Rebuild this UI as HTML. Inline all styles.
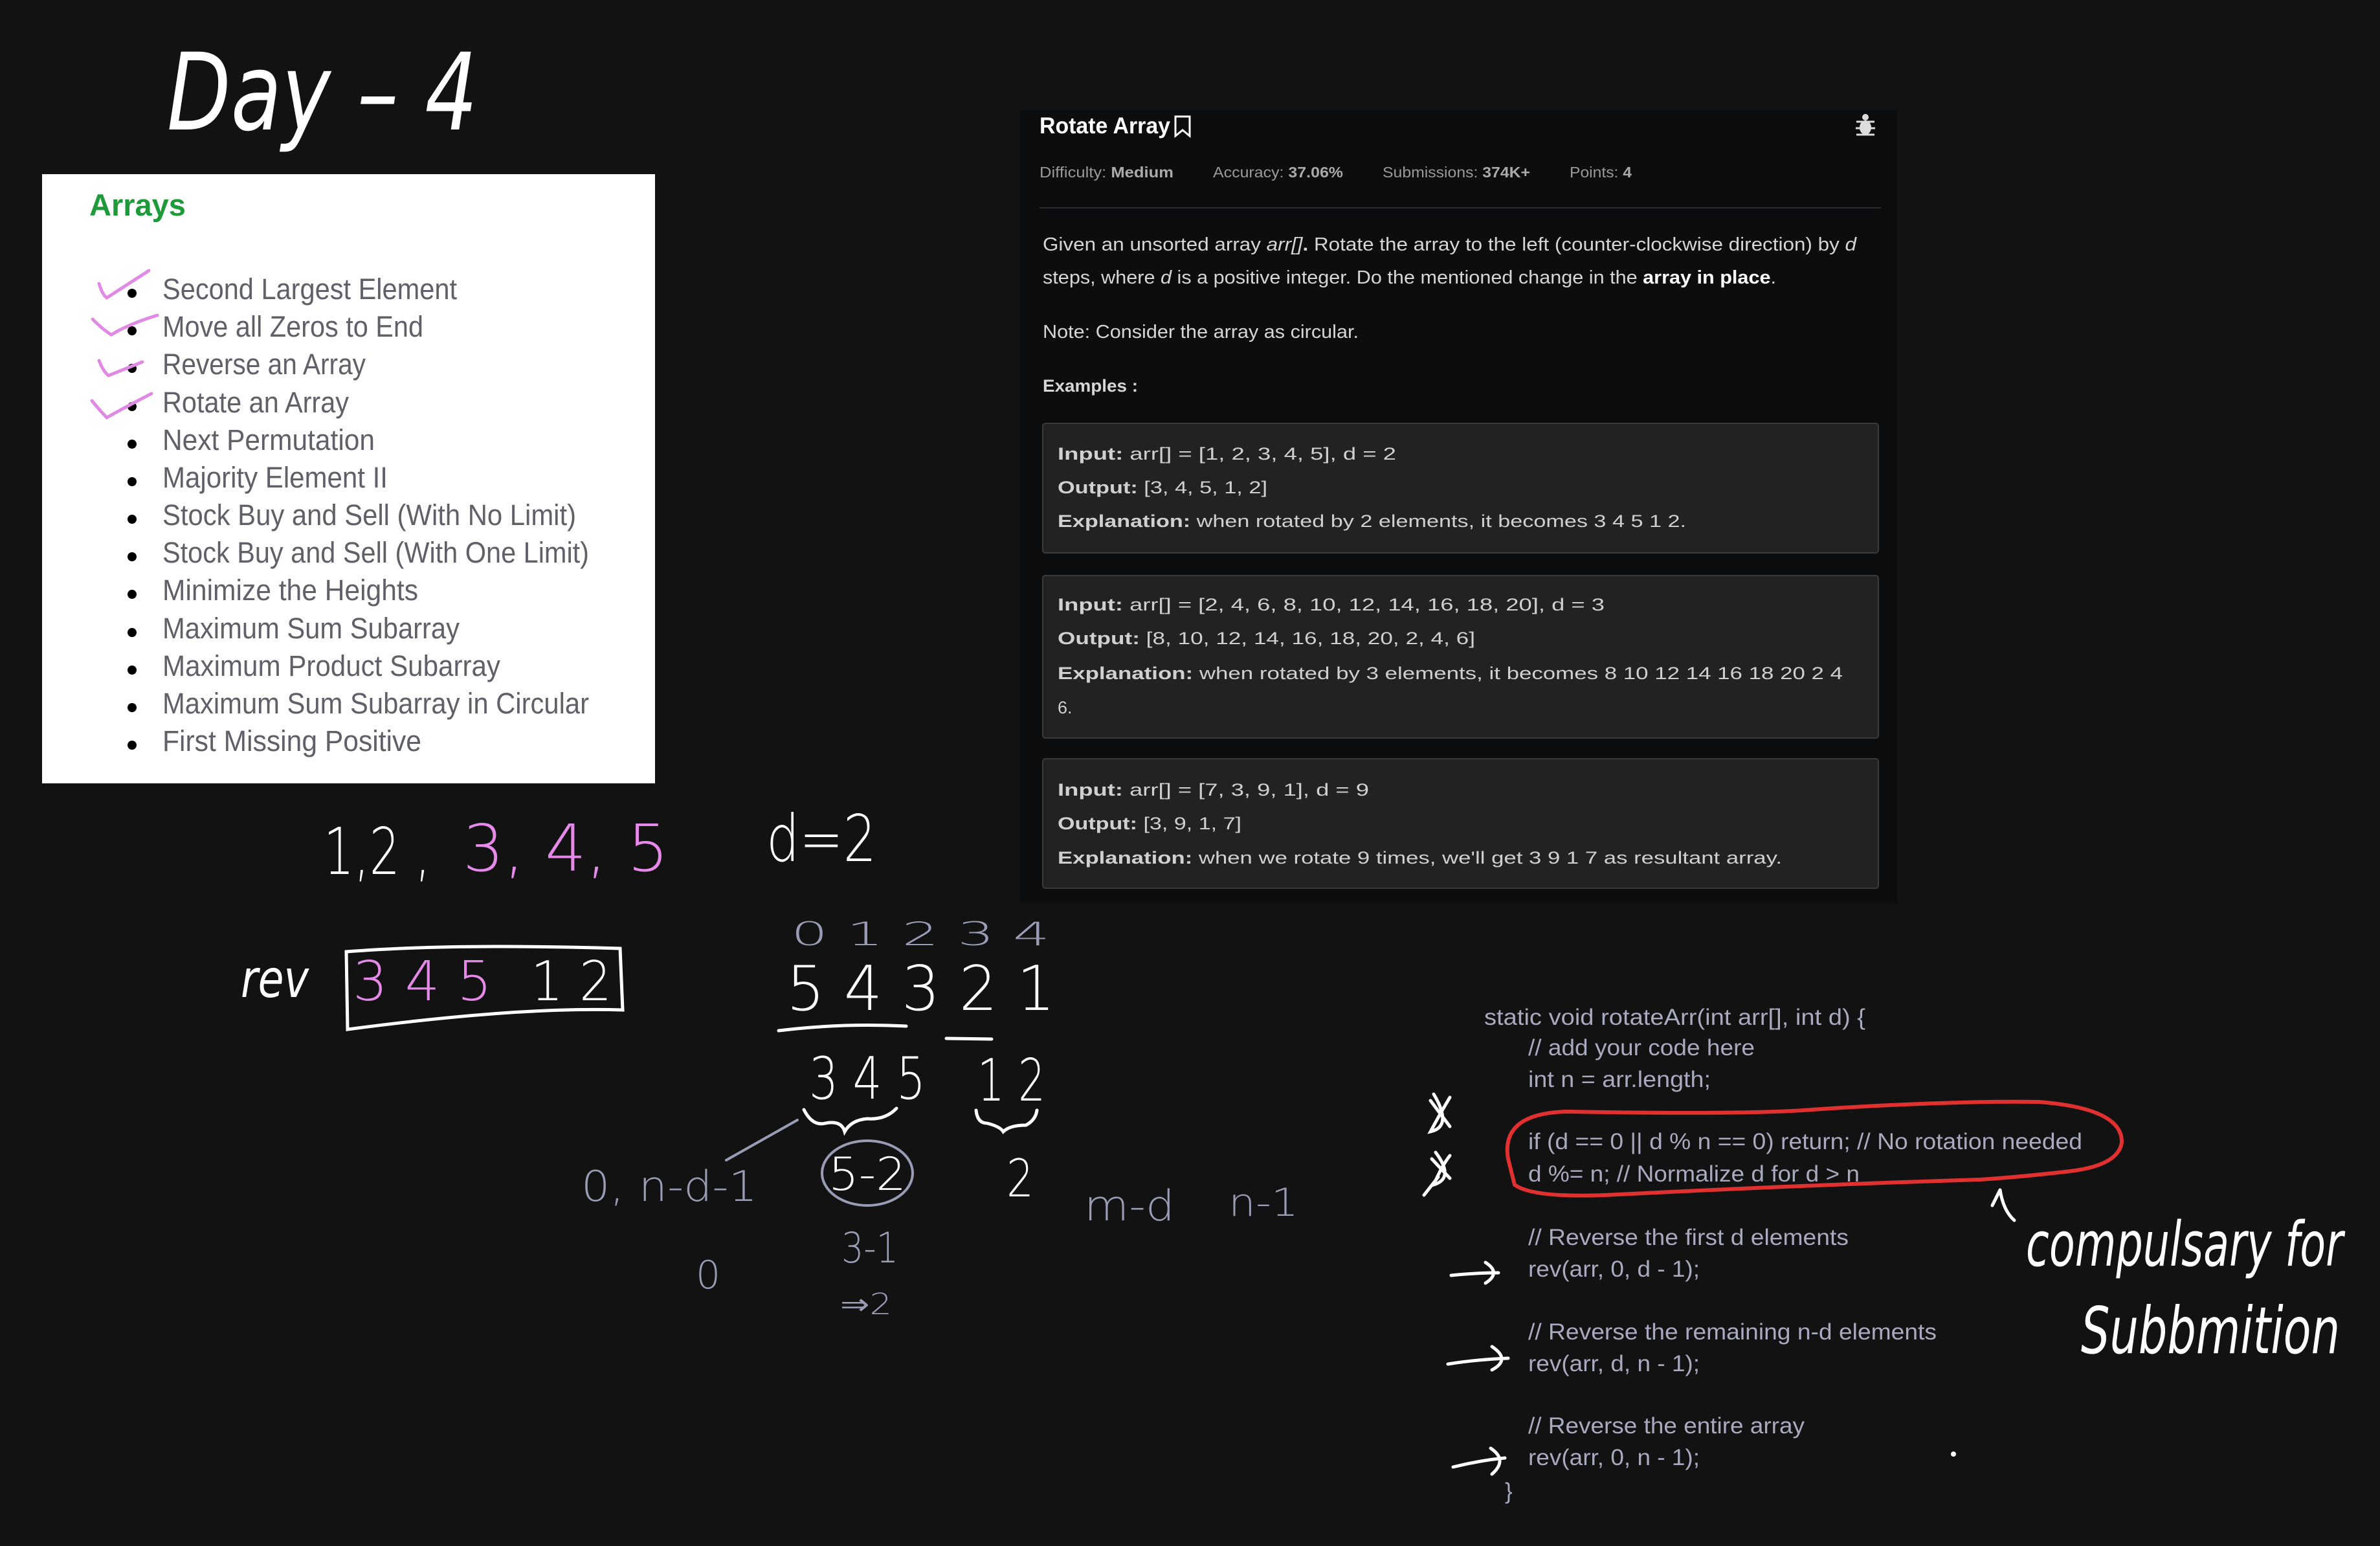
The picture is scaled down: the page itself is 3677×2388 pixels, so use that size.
<!DOCTYPE html>
<html><head><meta charset="utf-8"><style>
html,body{margin:0;padding:0;background:#121212;}
svg{display:block;}
.hw{font-family:"DejaVu Sans","Liberation Sans",sans-serif;font-weight:200;}
.ui{font-family:"Liberation Sans",sans-serif;}
</style></head><body>
<svg width="3677" height="2388" viewBox="0 0 3677 2388" xmlns="http://www.w3.org/2000/svg">
<rect width="3677" height="2388" fill="#121212"/>

<text x="258" y="200" class="hw" font-size="165" fill="#fff" textLength="480" lengthAdjust="spacingAndGlyphs" font-style="italic">Day – 4</text>

<rect x="65" y="269" width="947" height="941" fill="#fff"/>
<text x="138" y="333" class="ui" font-size="47" font-weight="bold" fill="#1e9a3a">Arrays</text>
<g class="ui" font-size="45" fill="#5f6068">
<text x="251" y="462" textLength="455" lengthAdjust="spacingAndGlyphs">Second Largest Element</text>
<text x="251" y="520" textLength="403" lengthAdjust="spacingAndGlyphs">Move all Zeros to End</text>
<text x="251" y="578" textLength="314" lengthAdjust="spacingAndGlyphs">Reverse an Array</text>
<text x="251" y="637" textLength="288" lengthAdjust="spacingAndGlyphs">Rotate an Array</text>
<text x="251" y="695" textLength="328" lengthAdjust="spacingAndGlyphs">Next Permutation</text>
<text x="251" y="753" textLength="348" lengthAdjust="spacingAndGlyphs">Majority Element II</text>
<text x="251" y="811" textLength="639" lengthAdjust="spacingAndGlyphs">Stock Buy and Sell (With No Limit)</text>
<text x="251" y="869" textLength="659" lengthAdjust="spacingAndGlyphs">Stock Buy and Sell (With One Limit)</text>
<text x="251" y="927" textLength="395" lengthAdjust="spacingAndGlyphs">Minimize the Heights</text>
<text x="251" y="986" textLength="459" lengthAdjust="spacingAndGlyphs">Maximum Sum Subarray</text>
<text x="251" y="1044" textLength="522" lengthAdjust="spacingAndGlyphs">Maximum Product Subarray</text>
<text x="251" y="1102" textLength="659" lengthAdjust="spacingAndGlyphs">Maximum Sum Subarray in Circular</text>
<text x="251" y="1160" textLength="400" lengthAdjust="spacingAndGlyphs">First Missing Positive</text>
</g>
<g fill="#000">
<circle cx="204" cy="453" r="7"/><circle cx="204" cy="511" r="7"/><circle cx="204" cy="569" r="7"/><circle cx="204" cy="628" r="7"/><circle cx="204" cy="686" r="7"/><circle cx="204" cy="744" r="7"/><circle cx="204" cy="802" r="7"/><circle cx="204" cy="860" r="7"/><circle cx="204" cy="918" r="7"/><circle cx="204" cy="977" r="7"/><circle cx="204" cy="1035" r="7"/><circle cx="204" cy="1093" r="7"/><circle cx="204" cy="1151" r="7"/>
</g>
<g stroke="#e08ae6" stroke-width="5" fill="none" stroke-linecap="round">
<path d="M153 438 Q158 455 165 460 L230 418"/>
<path d="M143 493 Q160 510 172 517 Q200 500 243 487"/>
<path d="M153 557 Q160 575 168 580 L220 559"/>
<path d="M142 619 Q155 635 165 645 Q195 628 234 608"/>
</g>

<rect x="1576" y="170" width="1355" height="1225" fill="#0b0d0f"/>
<text x="1606" y="206" class="ui" font-size="35" font-weight="bold" fill="#fff" textLength="202" lengthAdjust="spacingAndGlyphs">Rotate Array</text>
<path d="M1816 180 h22 v30 l-11 -9 l-11 9 z" fill="none" stroke="#fff" stroke-width="3"/>
<g fill="#ddd"><ellipse cx="2882" cy="197" rx="9" ry="11"/><circle cx="2882" cy="181" r="5"/>
<path d="M2868 188 l28 0 M2867 198 l30 0 M2868 208 l28 0" stroke="#ddd" stroke-width="3"/></g>
<g class="ui" font-size="23" fill="#9a9a9a">
<text x="1606" y="274" textLength="207" lengthAdjust="spacingAndGlyphs">Difficulty: <tspan font-weight="bold" fill="#aaa">Medium</tspan></text>
<text x="1874" y="274" textLength="201" lengthAdjust="spacingAndGlyphs">Accuracy: <tspan font-weight="bold" fill="#aaa">37.06%</tspan></text>
<text x="2136" y="274" textLength="228" lengthAdjust="spacingAndGlyphs">Submissions: <tspan font-weight="bold" fill="#aaa">374K+</tspan></text>
<text x="2425" y="274" textLength="96" lengthAdjust="spacingAndGlyphs">Points: <tspan font-weight="bold" fill="#aaa">4</tspan></text>
</g>
<rect x="1606" y="320" width="1300" height="2" fill="#2a2d30"/>
<g class="ui" font-size="29" fill="#d6d6d6">
<text x="1611" y="387" textLength="1257" lengthAdjust="spacingAndGlyphs">Given an unsorted array <tspan font-style="italic">arr[]</tspan><tspan font-weight="bold">.</tspan> Rotate the array to the left (counter-clockwise direction) by <tspan font-style="italic">d</tspan></text>
<text x="1611" y="438" textLength="1133" lengthAdjust="spacingAndGlyphs">steps, where <tspan font-style="italic">d</tspan> is a positive integer. Do the mentioned change in the <tspan font-weight="bold" fill="#fff">array in place</tspan>.</text>
<text x="1611" y="522" textLength="488" lengthAdjust="spacingAndGlyphs">Note: Consider the array as circular.</text>
<text x="1611" y="605" font-weight="bold" font-size="27" textLength="147" lengthAdjust="spacingAndGlyphs">Examples :</text>
</g>
<g fill="#222" stroke="#3a3a3a" stroke-width="2">
<rect x="1611" y="654" width="1291" height="200" rx="4"/>
<rect x="1611" y="889" width="1291" height="251" rx="4"/>
<rect x="1611" y="1172" width="1291" height="200" rx="4"/>
</g>
<g class="ui" font-size="27" fill="#d0d0d0">
<text x="1634" y="710" textLength="523" lengthAdjust="spacingAndGlyphs"><tspan font-weight="bold">Input:</tspan> arr[] = [1, 2, 3, 4, 5], d = 2</text>
<text x="1634" y="762" textLength="324" lengthAdjust="spacingAndGlyphs"><tspan font-weight="bold">Output:</tspan> [3, 4, 5, 1, 2]</text>
<text x="1634" y="814" textLength="971" lengthAdjust="spacingAndGlyphs"><tspan font-weight="bold">Explanation:</tspan> when rotated by 2 elements, it becomes 3 4 5 1 2.</text>
<text x="1634" y="943" textLength="845" lengthAdjust="spacingAndGlyphs"><tspan font-weight="bold">Input:</tspan> arr[] = [2, 4, 6, 8, 10, 12, 14, 16, 18, 20], d = 3</text>
<text x="1634" y="995" textLength="645" lengthAdjust="spacingAndGlyphs"><tspan font-weight="bold">Output:</tspan> [8, 10, 12, 14, 16, 18, 20, 2, 4, 6]</text>
<text x="1634" y="1049" textLength="1213" lengthAdjust="spacingAndGlyphs"><tspan font-weight="bold">Explanation:</tspan> when rotated by 3 elements, it becomes 8 10 12 14 16 18 20 2 4</text>
<text x="1634" y="1102">6.</text>
<text x="1634" y="1229" textLength="481" lengthAdjust="spacingAndGlyphs"><tspan font-weight="bold">Input:</tspan> arr[] = [7, 3, 9, 1], d = 9</text>
<text x="1634" y="1281" textLength="284" lengthAdjust="spacingAndGlyphs"><tspan font-weight="bold">Output:</tspan> [3, 9, 1, 7]</text>
<text x="1634" y="1334" textLength="1119" lengthAdjust="spacingAndGlyphs"><tspan font-weight="bold">Explanation:</tspan> when we rotate 9 times, we'll get 3 9 1 7 as resultant array.</text>
</g>

<g class="hw" fill="#fff" font-size="100">
<text x="500" y="1350" textLength="165" lengthAdjust="spacingAndGlyphs">1,2 ,</text>
<text x="715" y="1345" fill="#e58ae8" textLength="318" lengthAdjust="spacingAndGlyphs">3, 4, 5</text>
<text x="1184" y="1330" textLength="170" lengthAdjust="spacingAndGlyphs">d=2</text>
<text x="372" y="1540" font-size="80" font-style="italic" textLength="105" lengthAdjust="spacingAndGlyphs">rev</text>
<text x="545" y="1545" font-size="85" fill="#e58ae8" textLength="215" lengthAdjust="spacingAndGlyphs">3 4 5</text>
<text x="820" y="1545" font-size="85" textLength="125" lengthAdjust="spacingAndGlyphs">1 2</text>
<text x="1222" y="1460" font-size="50" fill="#9a9cb5" textLength="400" lengthAdjust="spacingAndGlyphs">0 1 2 3 4</text>
<text x="1215" y="1560" font-size="95" textLength="415" lengthAdjust="spacingAndGlyphs">5 4 3 2 1</text>
<text x="1250" y="1697" font-size="90" textLength="180" lengthAdjust="spacingAndGlyphs">3 4 5</text>
<text x="1510" y="1700" font-size="90" textLength="105" lengthAdjust="spacingAndGlyphs">1 2</text>
<text x="1555" y="1848" font-size="80" textLength="42" lengthAdjust="spacingAndGlyphs">2</text>
</g>
<g fill="none" stroke="#fff" stroke-width="5" stroke-linecap="round">
<path d="M535 1470 Q700 1457 958 1465 L962 1560 Q800 1555 537 1590 Z"/>
<path d="M1203 1592 Q1300 1580 1400 1585"/>
<path d="M1462 1604 L1532 1605"/>
<path d="M1242 1714 Q1255 1740 1275 1735 Q1300 1730 1305 1748 Q1315 1730 1340 1728 Q1368 1730 1385 1712"/>
<path d="M1508 1715 Q1510 1735 1525 1735 Q1545 1740 1550 1748 Q1560 1738 1585 1738 Q1600 1730 1602 1715"/>
</g>
<g fill="none" stroke="#9a9cb5" stroke-width="4" stroke-linecap="round">
<path d="M1122 1792 L1232 1730"/>
<ellipse cx="1340" cy="1812" rx="70" ry="50"/>
</g>
<g class="hw" fill="#9a9cb5">
<text x="1280" y="1838" font-size="70" fill="#fff" textLength="120" lengthAdjust="spacingAndGlyphs">5-2</text>
<text x="898" y="1855" font-size="65" textLength="272" lengthAdjust="spacingAndGlyphs">0, n-d-1</text>
<text x="1075" y="1990" font-size="60">0</text>
<text x="1300" y="1950" font-size="65" textLength="88" lengthAdjust="spacingAndGlyphs">3-1</text>
<text x="1298" y="2030" font-size="45" textLength="80" lengthAdjust="spacingAndGlyphs">⇒2</text>
<text x="1675" y="1885" font-size="65" textLength="140" lengthAdjust="spacingAndGlyphs">m-d</text>
<text x="1898" y="1878" font-size="60" textLength="108" lengthAdjust="spacingAndGlyphs">n-1</text>
</g>

<g class="ui" font-size="35" fill="#a9a9c0">
<text x="2293" y="1583" textLength="589" lengthAdjust="spacingAndGlyphs">static void rotateArr(int arr[], int d) {</text>
<text x="2361" y="1630" textLength="350" lengthAdjust="spacingAndGlyphs">// add your code here</text>
<text x="2361" y="1679" textLength="282" lengthAdjust="spacingAndGlyphs">int n = arr.length;</text>
<text x="2361" y="1775" textLength="856" lengthAdjust="spacingAndGlyphs">if (d == 0 || d % n == 0) return; // No rotation needed</text>
<text x="2361" y="1825" textLength="512" lengthAdjust="spacingAndGlyphs">d %= n; // Normalize d for d &gt; n</text>
<text x="2361" y="1923" textLength="495" lengthAdjust="spacingAndGlyphs">// Reverse the first d elements</text>
<text x="2361" y="1972" textLength="265" lengthAdjust="spacingAndGlyphs">rev(arr, 0, d - 1);</text>
<text x="2361" y="2069" textLength="631" lengthAdjust="spacingAndGlyphs">// Reverse the remaining n-d elements</text>
<text x="2361" y="2118" textLength="265" lengthAdjust="spacingAndGlyphs">rev(arr, d, n - 1);</text>
<text x="2361" y="2214" textLength="427" lengthAdjust="spacingAndGlyphs">// Reverse the entire array</text>
<text x="2361" y="2263" textLength="265" lengthAdjust="spacingAndGlyphs">rev(arr, 0, n - 1);</text>
<text x="2325" y="2315">}</text>
</g>
<path d="M2330 1790 Q2318 1720 2420 1717 Q2700 1722 2800 1714 Q3010 1700 3150 1702 Q3280 1712 3278 1765 Q3272 1802 3190 1810 Q3120 1818 3060 1822 Q2800 1830 2500 1845 Q2370 1852 2340 1830 Z" fill="none" stroke="#e03030" stroke-width="6"/>
<g fill="none" stroke="#fff" stroke-width="5" stroke-linecap="round">
<path d="M2215 1690 Q2245 1740 2210 1748 Q2225 1720 2240 1695 M2210 1700 L2240 1740"/>
<path d="M2218 1780 Q2248 1820 2215 1830 Q2228 1800 2240 1785 M2212 1790 L2240 1820 M2222 1818 L2200 1846"/>
<path d="M2242 1970 Q2280 1966 2315 1966 M2295 1950 Q2320 1966 2295 1982"/>
<path d="M2237 2107 Q2280 2100 2330 2098 M2305 2080 Q2335 2100 2305 2116"/>
<path d="M2245 2266 Q2285 2256 2325 2252 M2303 2237 Q2330 2255 2305 2277"/>
<path d="M3090 1838 Q3095 1870 3112 1885 M3090 1838 L3078 1862"/>
</g>
<circle cx="3018" cy="2246" r="4" fill="#fff"/>
<g class="hw" fill="#fff" font-style="italic">
<text x="3130" y="1955" font-size="95" textLength="490" lengthAdjust="spacingAndGlyphs">compulsary for</text>
<text x="3215" y="2090" font-size="100" textLength="400" lengthAdjust="spacingAndGlyphs">Subbmition</text>
</g>
</svg>
</body></html>
